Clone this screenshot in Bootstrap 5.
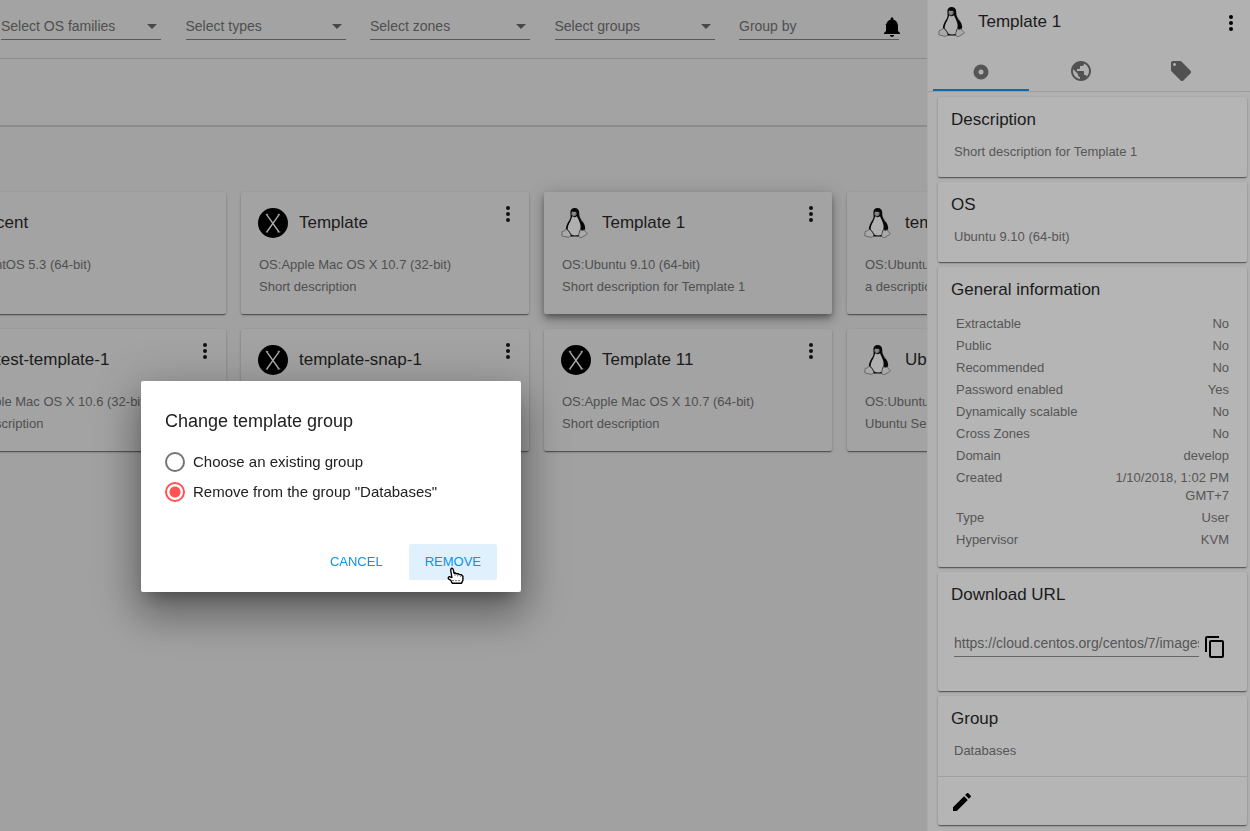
<!DOCTYPE html>
<html lang="en">
<head>
<meta charset="utf-8">
<meta name="viewport" content="width=device-width, initial-scale=1">
<title>Templates</title>
<link rel="stylesheet" href="https://cdn.jsdelivr.net/npm/bootstrap@5.3.0/dist/css/bootstrap.min.css">
<style>
  :root { --ink: #1b1b1b; --muted: #4f4f4f; --page: #a1a1a1; --surface: #a3a3a3; --panel: #b1b1b1; --panel-card: #b5b5b5; --blue: #0b93ec; }
  body { font-family: "Liberation Sans", Arial, sans-serif; font-size: 13px; line-height: 18px; color: var(--ink); background: var(--page); }
  .workspace { min-width: 0; overflow: hidden; }
  .filter-bar { height: 59px; padding: 13px 28px 0 1px; border-bottom: 1px solid #8c8c8c; background: var(--surface); }
  .filter-select { width: 160px; height: 27px; padding: 0; border: 0; border-bottom: 1px solid #575757; border-radius: 0; font-size: 14px; line-height: 20px; color: var(--muted); background: transparent url("data:image/svg+xml,%3Csvg xmlns='http://www.w3.org/2000/svg' width='10' height='5'%3E%3Cpath fill='%23484848' d='M0 0h10L5 5z'/%3E%3C/svg%3E") no-repeat right 4px top 11px; }
  .bell-btn { top: 15px; right: 23px; line-height: 0; }
  .icon-btn { padding: 0; border: 0; background: none; color: #000; line-height: 0; }
  .tool-strip { height: 68px; border-bottom: 2px solid #8c8c8c; background: var(--surface); }
  .tile-grid { display: grid; grid-template-columns: repeat(4, 288px); gap: 15px; margin: 65px 0 0 -62px; }
  .tile, .info-card { border: 0; border-radius: 2px; box-shadow: 0 2px 1px -1px rgba(0,0,0,.3), 0 1px 1px rgba(0,0,0,.2), 0 1px 3px rgba(0,0,0,.2); color: var(--ink); }
  .tile { min-height: 122px; padding: 16px 17px 0; background: var(--surface); }
  .tile.selected { box-shadow: 0 3px 5px -1px rgba(0,0,0,.3), 0 6px 10px rgba(0,0,0,.22), 0 1px 18px rgba(0,0,0,.16); }
  .tile-title, .info-title { font-size: 17px; line-height: 20px; font-weight: 400; margin: 0; }
  .tile-head { gap: 11px; height: 30px; }
  .tile-text { margin: 16px 0 0 1px; line-height: 22px; color: var(--muted); white-space: nowrap; }
  .tile-menu { top: 14px; right: 17px; }
  .detail-panel { width: 323px; background: var(--panel); border-left: 1px solid #a9a9a9; }
  .panel-head { height: 46px; padding: 7px 15px 9px 10px; gap: 10px; }
  .panel-head .info-title { padding-top: 5px; }
  .panel-tabs { height: 46px; padding-left: 5px; gap: 4px; border-bottom: 1px solid #9c9c9c; }
  .panel-tabs .nav-link { width: 96px; padding: 6px 0 0; color: #515151; border-bottom: 2px solid transparent; }
  .panel-tabs .nav-link.active { border-color: #0b6bab; }
  .panel-body { padding: 5px 3px 5px 10px; gap: 5px; }
  .info-card { background: var(--panel-card); padding: 13px 13px 16px; }
  .info-text { margin: 13px 0 0 3px; color: #565656; }
  .facts { table-layout: fixed; width: 273px; margin: 13px 0 0 5px; color: #565656; }
  .facts th { font-weight: 400; padding: 2px 0; vertical-align: top; }
  .facts td { padding: 2px 0; text-align: right; }
  .url-row { margin: 26px 7px 16px 3px; gap: 4px; }
  .url-input { height: 26px; padding: 0 0 2px; border: 0; border-bottom: 1px solid #666; border-radius: 0; background: none; font-size: 14px; line-height: 20px; color: #565656; min-width: 0; }
  .card-actions { margin: 16px -13px -16px; padding: 13px 12px; border-top: 1px solid #a0a0a0; height: 49px; }
  .modal-dialog { width: 380px; margin: 381px 0 0 141px; }
  .modal-content { border: 0; border-radius: 2px; padding: 24px 24px 12px; color: #212121; box-shadow: 0 11px 15px -7px rgba(0,0,0,.3), 0 24px 38px 3px rgba(0,0,0,.24), 0 9px 46px 8px rgba(0,0,0,.18); }
  .modal-title { font-size: 18px; line-height: 32px; font-weight: 400; margin-bottom: 10px; }
  .choice { height: 30px; gap: 8px; font-size: 15px; line-height: 20px; }
  .choice .form-check-input { width: 20px; height: 20px; margin: 0; border: 2px solid #757575; background: #fff; box-shadow: none; }
  .choice .form-check-input:checked { border-color: #ff5252; background: radial-gradient(circle, #ff5252 5px, #fff 6px); }
  .dialog-actions { gap: 10px; margin-top: 37px; }
  .dialog-btn { height: 36px; padding: 0 16px; border: 0; border-radius: 2px; font-size: 13px; line-height: 36px; color: var(--blue); }
  .dialog-btn.hovered { background: #e0f1fd; }
  .pointer { left: 38px; top: 23px; }
</style>
</head>
<body>
<svg class="d-none" xmlns="http://www.w3.org/2000/svg">
  <symbol id="dots" viewBox="0 0 4 16"><circle cx="2" cy="2" r="2"/><circle cx="2" cy="8" r="2"/><circle cx="2" cy="14" r="2"/></symbol>
  <symbol id="osx" viewBox="0 0 30 30"><circle cx="15" cy="15" r="15" fill="#000"/><path d="M8.500 6.300 21 24M21.300 6.300 8.800 24" stroke="#aaa" stroke-width="1.400" fill="none"/><path d="M7.700 6.300h2.600M19.600 6.300h2.400M7.800 24h2.200M19.400 24h3" stroke="#aaa" stroke-width=".8"/></symbol>
  <symbol id="tux" viewBox="0 0 30 30">
    <path fill="#080808" d="M13.600 0c-2.700 0-4.200 1.700-4.200 4.500 0 2.200.5 4-.1 5.700C8.300 12.700 6 15.300 5.300 18.300c-.4 1.600-.6 2.800-.2 4.100l4.300 6.100h8.500l4.200-5.700c1.800-.3 2.300-1.700 2-3.700-.6-4-3.400-6.500-4.900-9-.9-1.500-.9-3.700-1-5.600C18.100 1.700 16.500 0 13.600 0z"/>
    <path fill="#b0b0b0" d="M11.200 8.300c1.500 1.400 3.200 1.200 4.800-.1.900 2.200 2.200 4.400 3 7.100.8 2.400.8 4.400.2 6.500-1.100.8-1.200 3.100-1.400 5-2.200 1-5.100 1-7.200 0-.6-1.500-2.200-3.800-3.900-5.400-.1-2.500 1-5.300 2.600-8 .7-1.400 1.400-3 1.900-5.100z"/>
    <path fill="#a0a0a0" d="M10.900 4.200c.4-.8 1.300-.8 1.800.1.700-.9 2.100-.9 2.600.3.300.8.200 1.700-.2 2.300l-2.300 1.500-1.900-1.500c-.5-.7-.5-1.900 0-2.700z"/>
    <path fill="#333" d="M11.500 4.700h.8v1h-.8zM13.700 4.700h.9v1h-.9z"/><path d="m10.900 6.500 2.100.5 2.300-.6M11.400 7.300l1.600.6 1.900-.8" fill="none" stroke="#555" stroke-width=".5"/>
    <path fill="#aaa" stroke="#4a4a4a" stroke-width=".7" d="M5.500 21.400c1.300.5 2.600 2.300 3.500 4 .8 1.500.8 2.700-.3 3.400-1.300 1.100-3.700-.1-7.200-.8-.9-.2-.9-.8-.5-1.900.2-.8-.3-2 .2-2.600.8-.5 1.600-.1 2.500-.7.600-.4.900-1.700 1.800-1.400zM19.700 21.500c.8 1.100 2.300 1.500 3.400.2.700.2.700 1.600 1.500 2.400.7.600 1.700 1.100 1.800 1.700-.4.900-3 1.700-4.500 3-1.400 1.100-3.700 1-4.100-.4-.3-1.600.6-5.300 1.900-6.900z"/>
    <path stroke="#777" stroke-width=".8" d="m20 11.500 1.700 2.500"/>
  </symbol>
</svg>

<div class="d-flex min-vh-100">
  <main class="workspace flex-grow-1">
    <header class="filter-bar position-relative d-flex justify-content-between">
      <select class="filter-select form-select" aria-label="OS families"><option>Select OS families</option></select>
      <select class="filter-select form-select" aria-label="Types"><option>Select types</option></select>
      <select class="filter-select form-select" aria-label="Zones"><option>Select zones</option></select>
      <select class="filter-select form-select" aria-label="Groups"><option>Select groups</option></select>
      <select class="filter-select form-select" aria-label="Grouping"><option>Group by</option></select>
      <button class="icon-btn bell-btn position-absolute" type="button" aria-label="Notifications"><svg width="24" height="24" viewBox="0 0 24 24"><path d="M12 22c1.100 0 2-.9 2-2h-4c0 1.100.89 2 2 2zm6-6v-5c0-3.070-1.640-5.640-4.500-6.320V4c0-.83-.67-1.500-1.500-1.500s-1.500.67-1.500 1.500v.68C7.630 5.360 6 7.920 6 11v5l-2 2v1h16v-1l-2-2z"/></svg></button>
    </header>
    <div class="tool-strip"></div>

    <section class="tile-grid" aria-label="Templates">
      <article class="tile card">
        <div class="tile-head d-flex align-items-center"><svg width="30" height="30"><use href="#osx"/></svg><h2 class="tile-title">cent</h2></div>
        <p class="tile-text">OS:CentOS 5.3 (64-bit)</p>
      </article>
      <article class="tile card">
        <div class="tile-head d-flex align-items-center"><svg width="30" height="30"><use href="#osx"/></svg><h2 class="tile-title">Template</h2></div>
        <p class="tile-text">OS:Apple Mac OS X 10.7 (32-bit)<br>Short description</p>
        <button class="icon-btn tile-menu position-absolute" type="button" aria-label="Menu"><svg width="8" height="16" fill="#111"><use href="#dots"/></svg></button>
      </article>
      <article class="tile card selected">
        <div class="tile-head d-flex align-items-center"><svg width="30" height="30"><use href="#tux"/></svg><h2 class="tile-title">Template 1</h2></div>
        <p class="tile-text">OS:Ubuntu 9.10 (64-bit)<br>Short description for Template 1</p>
        <button class="icon-btn tile-menu position-absolute" type="button" aria-label="Menu"><svg width="8" height="16" fill="#111"><use href="#dots"/></svg></button>
      </article>
      <article class="tile card">
        <div class="tile-head d-flex align-items-center"><svg width="30" height="30"><use href="#tux"/></svg><h2 class="tile-title">template</h2></div>
        <p class="tile-text">OS:Ubuntu<br>a description</p>
      </article>
      <article class="tile card">
        <div class="tile-head d-flex align-items-center"><svg width="30" height="30"><use href="#osx"/></svg><h2 class="tile-title">test-template-1</h2></div>
        <p class="tile-text">OS:Apple Mac OS X 10.6 (32-bit)<br>test description</p>
        <button class="icon-btn tile-menu position-absolute" type="button" aria-label="Menu"><svg width="8" height="16" fill="#111"><use href="#dots"/></svg></button>
      </article>
      <article class="tile card">
        <div class="tile-head d-flex align-items-center"><svg width="30" height="30"><use href="#osx"/></svg><h2 class="tile-title">template-snap-1</h2></div>
        <button class="icon-btn tile-menu position-absolute" type="button" aria-label="Menu"><svg width="8" height="16" fill="#111"><use href="#dots"/></svg></button>
      </article>
      <article class="tile card">
        <div class="tile-head d-flex align-items-center"><svg width="30" height="30"><use href="#osx"/></svg><h2 class="tile-title">Template 11</h2></div>
        <p class="tile-text">OS:Apple Mac OS X 10.7 (64-bit)<br>Short description</p>
        <button class="icon-btn tile-menu position-absolute" type="button" aria-label="Menu"><svg width="8" height="16" fill="#111"><use href="#dots"/></svg></button>
      </article>
      <article class="tile card">
        <div class="tile-head d-flex align-items-center"><svg width="30" height="30"><use href="#tux"/></svg><h2 class="tile-title">Ubuntu</h2></div>
        <p class="tile-text">OS:Ubuntu<br>Ubuntu Server</p>
      </article>
    </section>
  </main>

  <aside class="detail-panel flex-shrink-0">
    <div class="panel-head d-flex align-items-start">
      <svg width="30" height="30"><use href="#tux"/></svg>
      <h1 class="info-title flex-grow-1">Template 1</h1>
      <button class="icon-btn mt-2" type="button" aria-label="Menu"><svg width="8" height="16"><use href="#dots"/></svg></button>
    </div>
    <nav class="panel-tabs nav">
      <a class="nav-link active d-flex align-items-center justify-content-center" href="#" aria-label="Details"><svg class="mt-1" width="16" height="20" viewBox="0 0 16 20" fill="none" stroke="#555"><circle cx="8" cy="9" r="5" stroke-width="5"/></svg></a>
      <a class="nav-link d-flex align-items-center justify-content-center" href="#" aria-label="Zones"><svg width="24" height="24" viewBox="0 0 24 24" fill="currentColor"><path d="M12 2C6.480 2 2 6.480 2 12s4.480 10 10 10 10-4.480 10-10S17.520 2 12 2zm-1 17.930c-3.950-.49-7-3.850-7-7.930 0-.62.08-1.210.21-1.790L9 15v1c0 1.100.9 2 2 2v1.930zm6.900-2.540c-.26-.81-1-1.390-1.900-1.390h-1v-3c0-.55-.45-1-1-1H8v-2h2c.55 0 1-.45 1-1V7h2c1.100 0 2-.9 2-2v-.41c2.930 1.190 5 4.060 5 7.410 0 2.080-.8 3.970-2.100 5.390z"/></svg></a>
      <a class="nav-link d-flex align-items-center justify-content-center" href="#" aria-label="Tags"><svg width="24" height="24" viewBox="0 0 24 24" fill="currentColor"><path d="M21.410 11.580l-9-9C12.050 2.220 11.550 2 11 2H4c-1.100 0-2 .9-2 2v7c0 .55.22 1.050.59 1.420l9 9c.36.36.86.58 1.410.58.55 0 1.050-.22 1.410-.59l7-7c.37-.36.59-.86.59-1.410 0-.55-.23-1.060-.59-1.420zM5.500 7C4.670 7 4 6.330 4 5.500S4.670 4 5.500 4 7 4.670 7 5.500 6.330 7 5.500 7z"/></svg></a>
    </nav>
    <div class="panel-body d-flex flex-column">
      <section class="info-card card"><h2 class="info-title">Description</h2><p class="info-text">Short description for Template 1</p></section>
      <section class="info-card card"><h2 class="info-title">OS</h2><p class="info-text">Ubuntu 9.10 (64-bit)</p></section>
      <section class="info-card card">
        <h2 class="info-title">General information</h2>
        <table class="facts">
          <tr><th scope="row">Extractable</th><td>No</td></tr>
          <tr><th scope="row">Public</th><td>No</td></tr>
          <tr><th scope="row">Recommended</th><td>No</td></tr>
          <tr><th scope="row">Password enabled</th><td>Yes</td></tr>
          <tr><th scope="row">Dynamically scalable</th><td>No</td></tr>
          <tr><th scope="row">Cross Zones</th><td>No</td></tr>
          <tr><th scope="row">Domain</th><td>develop</td></tr>
          <tr><th scope="row">Created</th><td>1/10/2018, 1:02 PM GMT+7</td></tr>
          <tr><th scope="row">Type</th><td>User</td></tr>
          <tr><th scope="row">Hypervisor</th><td>KVM</td></tr>
        </table>
      </section>
      <section class="info-card card">
        <h2 class="info-title">Download URL</h2>
        <div class="url-row d-flex">
          <input class="url-input flex-grow-1" type="text" aria-label="Download URL" readonly value="https://cloud.centos.org/centos/7/images/CentOS-7.qcow2">
          <button class="icon-btn mt-1" type="button" aria-label="Copy"><svg width="24" height="24" viewBox="0 0 24 24"><path d="M16 1H4c-1.100 0-2 .9-2 2v14h2V3h12V1zm3 4H8c-1.100 0-2 .9-2 2v14c0 1.100.9 2 2 2h11c1.100 0 2-.9 2-2V7c0-1.100-.9-2-2-2zm0 16H8V7h11v14z"/></svg></button>
        </div>
      </section>
      <section class="info-card card">
        <h2 class="info-title">Group</h2><p class="info-text">Databases</p>
        <div class="card-actions"><button class="icon-btn" type="button" aria-label="Edit group"><svg width="24" height="24" viewBox="0 0 24 24"><path d="M3 17.250V21h3.750L17.810 9.940l-3.750-3.750L3 17.250zM20.710 7.040c.39-.39.39-1.020 0-1.410l-2.340-2.340c-.39-.39-1.020-.39-1.410 0l-1.830 1.830 3.750 3.750 1.830-1.830z"/></svg></button></div>
      </section>
    </div>
  </aside>
</div>

<div class="modal d-block" role="dialog" aria-labelledby="dialog-title">
  <div class="modal-dialog">
    <form class="modal-content">
      <h2 class="modal-title" id="dialog-title">Change template group</h2>
      <div class="choice d-flex align-items-center"><input class="form-check-input" type="radio" name="group" id="existing"><label for="existing">Choose an existing group</label></div>
      <div class="choice d-flex align-items-center"><input class="form-check-input" type="radio" name="group" id="remove" checked><label for="remove">Remove from the group "Databases"</label></div>
      <div class="dialog-actions d-flex justify-content-end">
        <button class="dialog-btn btn" type="button">CANCEL</button>
        <button class="dialog-btn btn hovered position-relative" type="button">REMOVE
          <svg class="pointer position-absolute" width="18" height="18" viewBox="0 0 18 18"><path fill="#fff" stroke="#000" stroke-width="1.400" stroke-linejoin="round" d="M4.300 1.500c1-.5 1.800.1 2 1.200l.7 3.500 1.500-.2 1 .7 1.600-.1 1.100.9 1.800.1 1.900 1.700v4l-1.300 3H5.200l-1.400-3-2.300-1.500c-.6-.8-.1-2 .8-2.200l2.600.9L3.700 3c-.1-.7.100-1.200.6-1.500z"/><path d="M5 13.600h9M8 7v2.500m2.800-2v2m2.900-1v1.500" stroke="#555" stroke-width=".8" fill="none" stroke-dasharray="2 1"/></svg>
        </button>
      </div>
    </form>
  </div>
</div>
<script src="https://cdn.jsdelivr.net/npm/bootstrap@5.3.0/dist/js/bootstrap.bundle.min.js"></script>
</body>
</html>
